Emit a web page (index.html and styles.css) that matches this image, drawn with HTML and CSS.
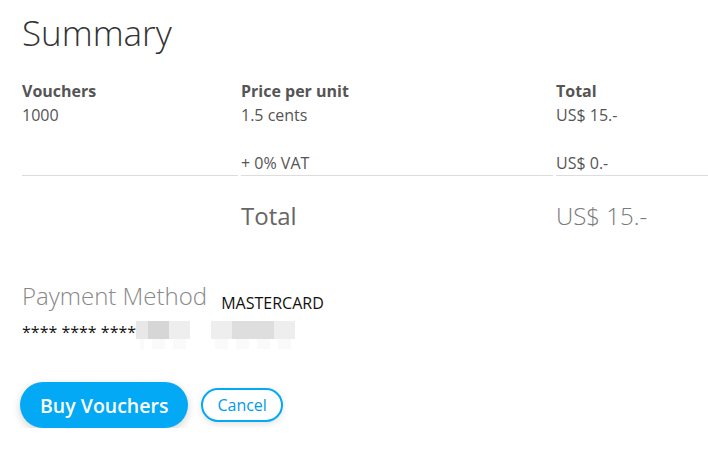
FILE: index.html
```html
<!DOCTYPE html>
<html lang="en">
<head>
  <meta charset="UTF-8" />
  <meta name="viewport" content="width=device-width, initial-scale=1.0"/>
  <title>Summary</title>
  <link rel="stylesheet" href="styles.css">
</head>
<body>

  <div class="page">
    <h1>Summary</h1>

    <div class="summary">
      <div class="cell">
        <div class="label">Vouchers</div>
        <div>1000</div>
      </div>
      <div class="cell">
        <div class="label">Price per unit</div>
        <div>1.5 cents</div>
      </div>
      <div class="cell">
        <div class="label">Total</div>
        <div>US$ 15.-</div>
      </div>

      <div class="cell vat"></div>
      <div class="cell vat">+ 0% VAT</div>
      <div class="cell vat">US$ 0.-</div>

      <div class="cell grand"></div>
      <div class="cell grand">Total</div>
      <div class="cell grand light">US$ 15.-</div>
    </div>

    <div class="payment">
      <h2>Payment Method</h2>
      <span class="card-type">MASTERCARD</span>
    </div>
    <div class="card-number">
      **** **** ****<span class="blur">
        <i class="b1"></i><i class="b2"></i><i class="b3"></i><i class="gap"></i><i class="b3"></i><i class="b4"></i><i class="b4"></i><i class="b3"></i>
      </span>
    </div>

    <div class="actions">
      <button class="buy">Buy Vouchers</button>
      <button class="cancel">Cancel</button>
    </div>
  </div>

</body>
</html>
```

FILE: styles.css
```css
body {
  margin: 0;
  padding: 0;
  background: #fff;
  font-family: "Open Sans", Arial, sans-serif;
  overflow: hidden;
}

.page {
  padding: 0 0 0 22px;
}

h1 {
  margin: 0;
  padding-top: 8px;
  font-size: 35px;
  font-weight: 300;
  line-height: 50px;
  color: #333;
}

.summary {
  display: grid;
  grid-template-columns: 216px 312px 1fr;
  column-gap: 3px;
  margin-top: 21px;
  font-size: 16px;
  line-height: 24px;
  color: #555;
}

.label {
  font-weight: 700;
  color: #555;
}

.vat {
  margin-top: 24px;
  border-bottom: 1px solid #ddd;
}

.grand {
  padding-top: 24px;
  font-size: 24px;
  line-height: 32px;
  color: #666;
}

.grand.light {
  font-weight: 300;
  color: #7a7a7a;
}

.payment {
  margin-top: 48px;
}

.payment h2 {
  display: inline;
  margin: 0;
  font-size: 24px;
  font-weight: 300;
  line-height: 32px;
  color: #888;
}

.card-type {
  margin-left: 10px;
  font-size: 16px;
  color: #111;
  vertical-align: -4px;
}

.card-number {
  display: flex;
  align-items: flex-start;
  margin-top: 6px;
  font-size: 16px;
  line-height: 24px;
  color: #111;
}

.blur {
  display: flex;
  margin-top: 1px;
}

.blur i {
  display: block;
  width: 21px;
  height: 18px;
  box-shadow: 0 14px 0 -4px #fafafa;
}

.blur .b1 { width: 12px; background: #e8e8e8; }
.blur .b2 { background: #d6d6d6; }
.blur .b3 { background: #eeeeee; }
.blur .b4 { background: #dedede; }
.blur .gap { background: transparent; box-shadow: none; }

.actions {
  display: flex;
  align-items: center;
  gap: 13px;
  margin-top: 38px;
  margin-left: -2px;
}

button {
  font-family: "Open Sans", Arial, sans-serif;
  cursor: pointer;
  border-radius: 999px;
}

.buy {
  height: 46px;
  padding: 0 20px;
  font-size: 19.5px;
  font-weight: 600;
  color: #fff;
  background: #03a9f4;
  border: none;
  box-shadow: 0 3px 8px rgba(0, 0, 0, 0.18);
}

.cancel {
  height: 34px;
  padding: 0 14px;
  font-size: 16px;
  font-weight: 400;
  color: #039be5;
  background: #fff;
  border: 2px solid #03a9f4;
  box-shadow: 0 2px 6px rgba(0, 0, 0, 0.12);
}
```
